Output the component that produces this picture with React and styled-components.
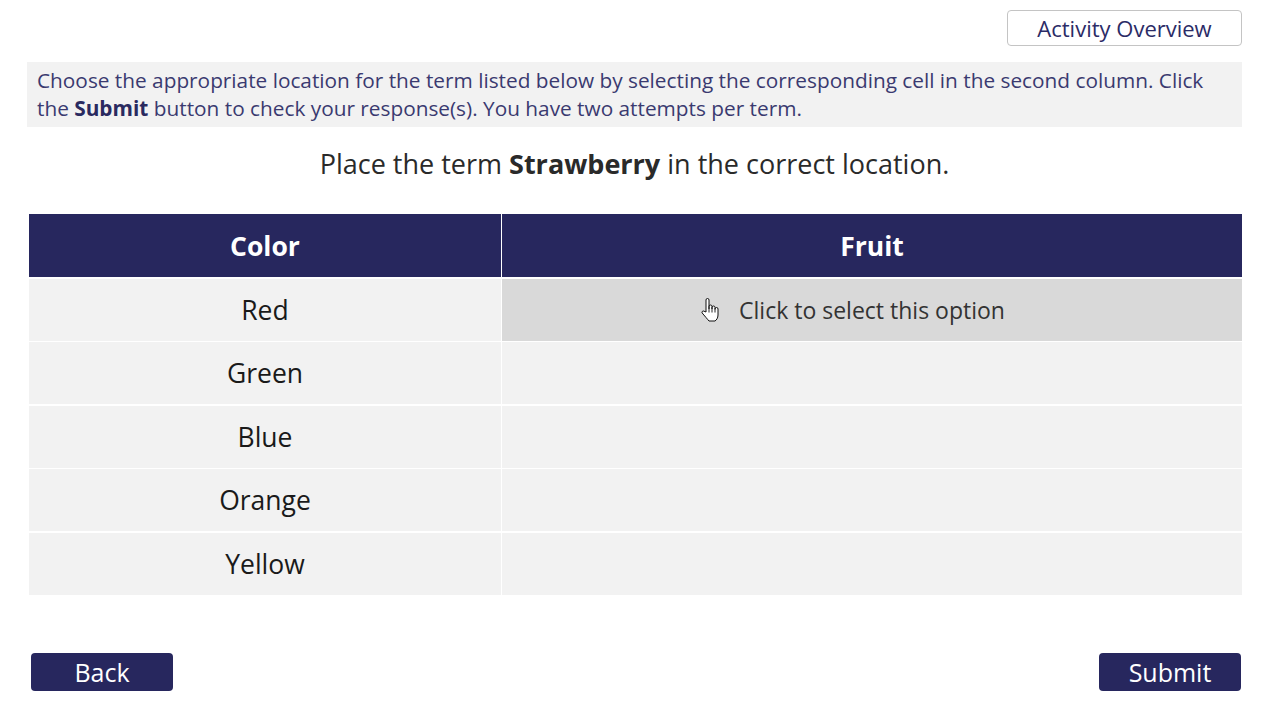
import React from "react";
import styled, { createGlobalStyle } from "styled-components";

const Global = createGlobalStyle`
  html, body {
    margin: 0;
    padding: 0;
    background: #ffffff;
    font-family: "Open Sans", "Noto Sans", sans-serif;
  }
`;

const Page = styled.div`
  width: 1267px;
  height: 712px;
  box-sizing: border-box;
  padding: 10px 25px 0 27px;
  display: flex;
  flex-direction: column;
`;

const TopBar = styled.div`
  display: flex;
  justify-content: flex-end;
`;

const OverviewButton = styled.button`
  width: 235px;
  height: 36px;
  box-sizing: border-box;
  border: 1px solid #c4c4c4;
  border-radius: 4px;
  background: #ffffff;
  color: #2b2b66;
  font-family: "Open Sans", sans-serif;
  font-size: 22px;
  padding: 0;
  line-height: 34px;
`;

const Instructions = styled.div`
  margin-top: 16px;
  background: #f2f2f2;
  padding: 4px 10px 5px 10px;
  color: #3a3a70;
  font-size: 20.8px;
  line-height: 28px;
  b {
    color: #2a2a60;
    font-weight: 700;
  }
`;

const Prompt = styled.div`
  margin-top: 19px;
  text-align: center;
  font-size: 27px;
  color: #2a2a2a;
  line-height: 36px;
  b {
    font-weight: 700;
  }
`;

const Table = styled.div`
  margin-top: 32px;
  margin-left: 2px;
  width: 1213px;
  display: grid;
  grid-template-columns: 472px 1fr;
  grid-template-rows: 63px repeat(5, 62px);
  column-gap: 1px;
  row-gap: 1.5px;
`;

const HeadCell = styled.div`
  background: #27275e;
  color: #ffffff;
  font-weight: 700;
  font-size: 26.5px;
  display: flex;
  align-items: center;
  justify-content: center;
`;

const Cell = styled.div`
  background: ${(p) => (p.$active ? "#d9d9d9" : "#f2f2f2")};
  color: ${(p) => (p.$active ? "#333333" : "#1a1a1a")};
  font-size: ${(p) => (p.$small ? "23px" : "26.5px")};
  display: flex;
  align-items: center;
  justify-content: center;
  gap: 20px;
  cursor: ${(p) => (p.$active ? "pointer" : "default")};
`;

const IconSlot = styled.span`
  display: flex;
  margin-left: -38px;
`;

const Footer = styled.div`
  margin-top: auto;
  margin-bottom: 21px;
  padding: 0 1px 0 4px;
  display: flex;
  justify-content: space-between;
`;

const NavButton = styled.button`
  width: 142px;
  height: 38px;
  border: none;
  border-radius: 4px;
  background: #27275e;
  color: #ffffff;
  font-family: "Open Sans", sans-serif;
  font-size: 25px;
  line-height: 38px;
  padding: 0;
`;

const HandIcon = () => (
  <svg width="18" height="24" viewBox="0 0 18 24">
    <path
      d="M5 14V2a1.5 1.5 0 0 1 3 0v9V8.5a1.5 1.5 0 0 1 3 0V11V9.5a1.5 1.5 0 0 1 3 0v2V11a1.5 1.5 0 0 1 3 0v6c0 3-1.5 5-3 6H8c-1-1-2-2.5-3-3.5L1.2 15a1.3 1.3 0 0 1 1.8-1.8z"
      fill="#ffffff"
      stroke="#111111"
      strokeWidth="1"
      strokeLinejoin="round"
    />
    <path d="M8 11v3.5M11 11v3.5M14 11.5v3" stroke="#111111" strokeWidth="0.9" />
  </svg>
);

const rows = ["Red", "Green", "Blue", "Orange", "Yellow"];

export default function App() {
  return (
    <>
      <Global />
      <Page>
        <TopBar>
          <OverviewButton>Activity Overview</OverviewButton>
        </TopBar>
        <Instructions>
          Choose the appropriate location for the term listed below by selecting the
          corresponding cell in the second column. Click the <b>Submit</b> button to check
          your response(s). You have two attempts per term.
        </Instructions>
        <Prompt>
          Place the term <b>Strawberry</b> in the correct location.
        </Prompt>
        <Table>
          <HeadCell>Color</HeadCell>
          <HeadCell>Fruit</HeadCell>
          {rows.map((r, i) => (
            <React.Fragment key={r}>
              <Cell>{r}</Cell>
              {i === 0 ? (
                <Cell $active $small>
                  <IconSlot>
                    <HandIcon />
                  </IconSlot>
                  Click to select this option
                </Cell>
              ) : (
                <Cell />
              )}
            </React.Fragment>
          ))}
        </Table>
        <Footer>
          <NavButton>Back</NavButton>
          <NavButton>Submit</NavButton>
        </Footer>
      </Page>
    </>
  );
}
